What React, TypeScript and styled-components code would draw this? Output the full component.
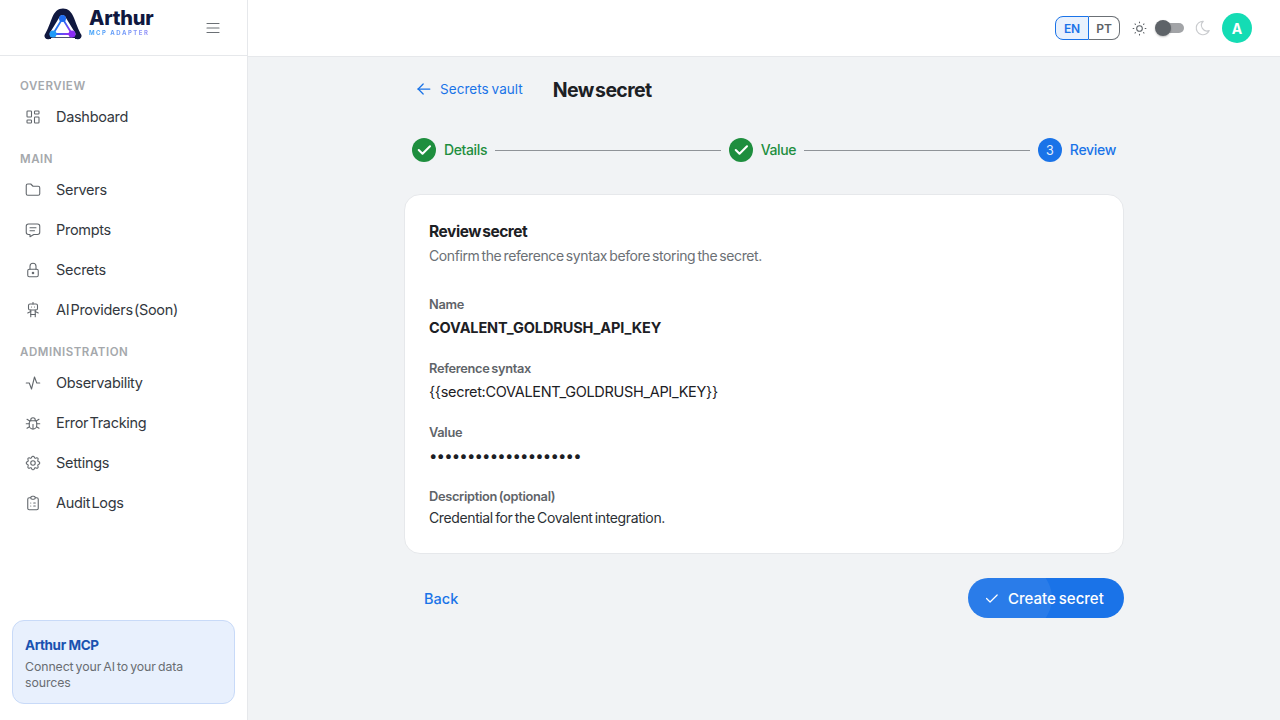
import React from 'react';
import styled, { createGlobalStyle } from 'styled-components';
import {
  TbActivity,
  TbArrowLeft,
  TbBug,
  TbCheck,
  TbClipboardList,
  TbFolder,
  TbLayoutDashboard,
  TbLock,
  TbMenu2,
  TbMessage,
  TbMoon,
  TbRobot,
  TbSettings,
  TbSun,
} from 'react-icons/tb';

const GlobalStyle = createGlobalStyle`
  html, body { margin: 0; padding: 0; height: 100%; }
  body {
    font-family: Inter, "Liberation Sans", sans-serif;
    color: #1c2024;
    background: #f1f3f5;
    overflow: hidden;
  }
  * { box-sizing: border-box; }
`;

const navGroups = [
  { title: 'OVERVIEW', items: [{ label: 'Dashboard', icon: TbLayoutDashboard }] },
  {
    title: 'MAIN',
    items: [
      { label: 'Servers', icon: TbFolder },
      { label: 'Prompts', icon: TbMessage },
      { label: 'Secrets', icon: TbLock },
      { label: 'AI Providers (Soon)', icon: TbRobot },
    ],
  },
  {
    title: 'ADMINISTRATION',
    items: [
      { label: 'Observability', icon: TbActivity },
      { label: 'Error Tracking', icon: TbBug },
      { label: 'Settings', icon: TbSettings },
      { label: 'Audit Logs', icon: TbClipboardList },
    ],
  },
];

const Logo = () => (
  <LogoWrap>
    <svg viewBox="0 0 38 32">
      <defs>
        <linearGradient id="tri" x1="0" y1="0" x2="1" y2="0.6">
          <stop offset="0" stopColor="#1f9bf8" />
          <stop offset="0.5" stopColor="#2a6cf2" />
          <stop offset="1" stopColor="#8a35f5" />
        </linearGradient>
      </defs>
      <path
        d="M0.5 27 C3 23 5 18 8 10 C10.500 3.500 14 0.500 19 0.500 C24 0.500 27.500 3.500 30 10 C33 18 35 23 37.500 27 C38 30 35.500 32 32.500 31 L5.500 31 C2.500 32 0 30 0.500 27 Z"
        fill="#10183f"
      />
      <path
        d="M18.500 10.500 L28 26 L9 26 Z"
        fill="#fff"
        stroke="#fff"
        strokeWidth="6.500"
        strokeLinejoin="round"
      />
      <rect x="7" y="30" width="24" height="2" fill="#fff" />
      <path
        d="M18.500 10.500 L28 26 L9 26 Z"
        fill="#fff"
        stroke="url(#tri)"
        strokeWidth="1.800"
        strokeLinejoin="round"
      />
      <circle cx="18.500" cy="10.500" r="3.500" fill="#1f6cf0" />
      <circle cx="9" cy="26" r="3.500" fill="#1f9bf8" />
      <circle cx="28" cy="26" r="3.500" fill="#8a2cf5" />
    </svg>
    <LogoText>
      <LogoName>Arthur</LogoName>
      <LogoSub>MCP ADAPTER</LogoSub>
    </LogoText>
  </LogoWrap>
);

const App = () => (
  <>
    <GlobalStyle />
    <Shell>
      <Sidebar>
        <SideHead>
          <Logo />
          <MenuButton>
            <TbMenu2 />
          </MenuButton>
        </SideHead>
        <Nav>
          {navGroups.map((group) => (
            <NavGroup key={group.title}>
              <GroupTitle>{group.title}</GroupTitle>
              {group.items.map(({ label, icon: Icon }) => (
                <NavItem key={label}>
                  <Icon />
                  <span>{label}</span>
                </NavItem>
              ))}
            </NavGroup>
          ))}
        </Nav>
        <Promo>
          <PromoTitle>Arthur MCP</PromoTitle>
          <PromoText>Connect your AI to your data sources</PromoText>
        </Promo>
      </Sidebar>
      <Main>
        <TopBar>
          <LangGroup>
            <LangButton $active>EN</LangButton>
            <LangButton>PT</LangButton>
          </LangGroup>
          <SunIcon>
            <TbSun />
          </SunIcon>
          <Switch>
            <SwitchKnob />
          </Switch>
          <MoonIcon>
            <TbMoon />
          </MoonIcon>
          <Avatar>A</Avatar>
        </TopBar>
        <Content>
          <Page>
            <PageHead>
              <BackLink>
                <TbArrowLeft />
                Secrets vault
              </BackLink>
              <PageTitle>New secret</PageTitle>
            </PageHead>
            <Stepper>
              <Step>
                <DoneDot>
                  <TbCheck />
                </DoneDot>
                <StepLabel $done>Details</StepLabel>
              </Step>
              <Connector />
              <Step>
                <DoneDot>
                  <TbCheck />
                </DoneDot>
                <StepLabel $done>Value</StepLabel>
              </Step>
              <Connector />
              <Step>
                <ActiveDot>3</ActiveDot>
                <StepLabel>Review</StepLabel>
              </Step>
            </Stepper>
            <Card>
              <CardTitle>Review secret</CardTitle>
              <CardSub>Confirm the reference syntax before storing the secret.</CardSub>
              <FieldList>
                <Field>
                  <FieldLabel>Name</FieldLabel>
                  <NameValue>COVALENT_GOLDRUSH_API_KEY</NameValue>
                </Field>
                <Field>
                  <FieldLabel>Reference syntax</FieldLabel>
                  <FieldValue>{'{{secret:COVALENT_GOLDRUSH_API_KEY}}'}</FieldValue>
                </Field>
                <Field>
                  <FieldLabel>Value</FieldLabel>
                  <Dots>••••••••••••••••••••</Dots>
                </Field>
                <Field>
                  <FieldLabel>Description (optional)</FieldLabel>
                  <DescValue>Credential for the Covalent integration.</DescValue>
                </Field>
              </FieldList>
            </Card>
            <Actions>
              <TextButton>Back</TextButton>
              <PrimaryButton>
                <TbCheck />
                <span>Create secret</span>
              </PrimaryButton>
            </Actions>
          </Page>
        </Content>
      </Main>
    </Shell>
  </>
);

export default App;

const Shell = styled.div`
  display: flex;
  width: 1280px;
  height: 720px;
`;

const Sidebar = styled.aside`
  display: flex;
  flex-direction: column;
  width: 248px;
  flex-shrink: 0;
  background: #fff;
  border-right: 1px solid #e6e8eb;
`;

const SideHead = styled.div`
  display: flex;
  align-items: center;
  justify-content: space-between;
  height: 56px;
  padding: 0 25px 0 44px;
  border-bottom: 1px solid #e6e8eb;
`;

const LogoWrap = styled.div`
  display: flex;
  align-items: flex-start;
  gap: 7px;
  margin-bottom: 7px;

  svg {
    display: block;
    width: 38px;
    height: 32px;
  }
`;

const LogoText = styled.div`
  display: flex;
  flex-direction: column;
`;

const LogoName = styled.div`
  font-size: 20px;
  line-height: 21px;
  font-weight: 800;
  letter-spacing: -0.2px;
  color: #10183f;
`;

const LogoSub = styled.div`
  font-size: 6px;
  line-height: 7px;
  font-weight: 700;
  letter-spacing: 1.5px;
  background: linear-gradient(90deg, #38a0f8, #9a8cf8);
  -webkit-background-clip: text;
  background-clip: text;
  color: transparent;
`;

const MenuButton = styled.div`
  display: flex;
  color: #6b7075;

  svg {
    width: 18px;
    height: 18px;
    stroke-width: 1.5;
  }
`;

const Nav = styled.nav`
  display: flex;
  flex-direction: column;
  flex: 1;
  padding-top: 22px;
`;

const NavGroup = styled.div`
  display: flex;
  flex-direction: column;
  margin-bottom: 14px;
`;

const GroupTitle = styled.div`
  padding-left: 20px;
  margin-bottom: 3px;
  font-size: 11.5px;
  line-height: 16px;
  font-weight: 600;
  letter-spacing: 0.55px;
  color: #a5a8ac;
`;

const NavItem = styled.div`
  display: flex;
  align-items: center;
  gap: 14px;
  height: 40px;
  padding-left: 24px;
  padding-bottom: 1px;
  font-size: 14.5px;
  letter-spacing: -0.3px;
  word-spacing: -2.6px;
  color: #33383e;

  svg {
    width: 18px;
    height: 18px;
    stroke-width: 1.45;
    color: #62676c;
    flex-shrink: 0;
  }
`;

const Promo = styled.div`
  margin: 0 12px 16px;
  height: 84px;
  padding: 14px 12px 0;
  background: #e8f0fd;
  border: 1px solid #c8daf8;
  border-radius: 12px;
`;

const PromoTitle = styled.div`
  font-size: 13.5px;
  line-height: 20px;
  font-weight: 700;
  letter-spacing: -0.4px;
  color: #1a52b0;
`;

const PromoText = styled.div`
  margin-top: 4px;
  font-size: 12.3px;
  line-height: 16px;
  letter-spacing: -0.08px;
  word-spacing: -1.3px;
  color: #686d72;
`;

const Main = styled.main`
  display: flex;
  flex-direction: column;
  flex: 1;
  min-width: 0;
`;

const TopBar = styled.header`
  display: flex;
  align-items: center;
  justify-content: flex-end;
  height: 57px;
  padding: 0 28px 0 0;
  background: #fff;
  border-bottom: 1px solid #e6e8eb;
`;

const LangGroup = styled.div`
  display: flex;
  margin-right: 11px;
`;

const LangButton = styled.div<{ $active?: boolean }>`
  display: flex;
  align-items: center;
  justify-content: center;
  width: ${(p) => (p.$active ? '34px' : '31px')};
  height: 24px;
  font-size: 12px;
  font-weight: 600;
  letter-spacing: -0.2px;
  color: ${(p) => (p.$active ? '#1a73e8' : '#5c6166')};
  background: ${(p) => (p.$active ? '#e9f1fd' : 'transparent')};
  border: 1px solid ${(p) => (p.$active ? '#1a73e8' : '#6b7075')};
  border-left-width: ${(p) => (p.$active ? '1px' : '0')};
  border-radius: ${(p) => (p.$active ? '8px 0 0 8px' : '0 8px 8px 0')};
`;

const SunIcon = styled.div`
  display: flex;
  color: #5c6166;

  svg {
    width: 17px;
    height: 17px;
    stroke-width: 1.5;
  }
`;

const MoonIcon = styled.div`
  display: flex;
  color: #c9cbce;

  svg {
    width: 18px;
    height: 18px;
    stroke-width: 1.5;
  }
`;

const Switch = styled.div`
  position: relative;
  width: 28px;
  height: 10px;
  margin: 0 10px 0 8px;
  border-radius: 5px;
  background: #a2a4a7;
`;

const SwitchKnob = styled.div`
  position: absolute;
  left: -1px;
  top: -3px;
  width: 16px;
  height: 16px;
  border-radius: 50%;
  background: #5e6368;
  box-shadow: 0 1px 2px rgba(0, 0, 0, 0.25);
`;

const Avatar = styled.div`
  display: flex;
  align-items: center;
  justify-content: center;
  width: 30px;
  height: 30px;
  margin-left: 10px;
  border-radius: 50%;
  background: #14dcb4;
  color: #fff;
  font-size: 14px;
  font-weight: 700;
`;

const Content = styled.div`
  display: flex;
  justify-content: center;
  flex: 1;
  background: #f1f3f5;
`;

const Page = styled.div`
  display: flex;
  flex-direction: column;
  width: 720px;
`;

const PageHead = styled.div`
  display: flex;
  align-items: center;
  height: 66px;
`;

const BackLink = styled.div`
  display: flex;
  align-items: center;
  gap: 6px;
  margin: 0 30px 2px 10px;
  font-size: 13.5px;
  letter-spacing: 0.05px;
  word-spacing: -1px;
  color: #1a73e8;

  svg {
    width: 20px;
    height: 20px;
    stroke-width: 1.5;
  }
`;

const PageTitle = styled.h1`
  margin: 0;
  font-size: 19.5px;
  font-weight: 700;
  letter-spacing: -0.65px;
  word-spacing: -2.5px;
  color: #1c2024;
`;

const Stepper = styled.div`
  display: flex;
  align-items: center;
  height: 24px;
  margin-top: 15px;
  margin-bottom: 32px;
  padding: 0 8px;
`;

const Step = styled.div`
  display: flex;
  align-items: center;
  gap: 8px;
`;

const Connector = styled.div`
  flex: 1;
  height: 1px;
  margin: 0 8px;
  background: #8f9398;
`;

const DoneDot = styled.div`
  display: flex;
  align-items: center;
  justify-content: center;
  width: 24px;
  height: 24px;
  border-radius: 50%;
  background: #1e8e3e;
  color: #fff;

  svg {
    width: 18px;
    height: 18px;
    stroke-width: 2.8;
  }
`;

const ActiveDot = styled.div`
  display: flex;
  align-items: center;
  justify-content: center;
  width: 24px;
  height: 24px;
  border-radius: 50%;
  background: #1a73e8;
  color: #e6f0fd;
  font-size: 12.5px;
`;

const StepLabel = styled.div<{ $done?: boolean }>`
  padding-bottom: 1px;
  font-size: 14px;
  font-weight: 500;
  letter-spacing: ${(p) => (p.$done ? '-0.38px' : '-0.3px')};
  color: ${(p) => (p.$done ? '#1e8e3e' : '#1a73e8')};
`;

const Card = styled.section`
  display: flex;
  flex-direction: column;
  height: 360px;
  padding: 26px 24px 0;
  background: #fff;
  border: 1px solid #e6e8eb;
  border-radius: 16px;
`;

const CardTitle = styled.h2`
  margin: 0;
  font-size: 15.5px;
  line-height: 22px;
  font-weight: 700;
  letter-spacing: -0.45px;
  word-spacing: -2px;
  color: #1c2024;
`;

const CardSub = styled.p`
  margin: 3px 0 0;
  font-size: 14px;
  line-height: 20px;
  letter-spacing: -0.4px;
  word-spacing: -1.4px;
  color: #6b7075;
`;

const FieldList = styled.div`
  display: flex;
  flex-direction: column;
  margin-top: 30px;
`;

const Field = styled.div`
  display: flex;
  flex-direction: column;
  height: 64px;
`;

const FieldLabel = styled.div`
  font-size: 12.8px;
  line-height: 18px;
  font-weight: 600;
  letter-spacing: -0.3px;
  word-spacing: -1.2px;
  color: #5f6469;
`;

const NameValue = styled.div`
  margin-top: 3px;
  font-size: 14.5px;
  line-height: 22px;
  font-weight: 700;
  letter-spacing: -0.12px;
  color: #1c2024;
`;

const FieldValue = styled.div`
  margin-top: 3px;
  font-size: 14.5px;
  line-height: 22px;
  letter-spacing: -0.32px;
  color: #1c2024;
`;

const Dots = styled.div`
  margin-top: 3px;
  font-size: 15px;
  line-height: 22px;
  letter-spacing: -0.85px;
  color: #1c2024;
`;

const DescValue = styled.div`
  margin-top: 2px;
  font-size: 14px;
  line-height: 20px;
  letter-spacing: -0.38px;
  word-spacing: -1.2px;
  color: #2b3035;
`;

const Actions = styled.div`
  display: flex;
  align-items: center;
  justify-content: space-between;
  margin-top: 24px;
`;

const TextButton = styled.div`
  margin-left: 20px;
  font-size: 14.5px;
  font-weight: 500;
  color: #1a73e8;
`;

const PrimaryButton = styled.div`
  position: relative;
  display: flex;
  align-items: center;
  gap: 8px;
  width: 156px;
  height: 40px;
  padding-left: 15px;
  overflow: hidden;
  border-radius: 20px;
  background: #1a73e8;
  color: #fff;
  font-size: 15px;
  font-weight: 500;
  word-spacing: -1px;

  &::before {
    content: '';
    position: absolute;
    left: -22px;
    top: -22px;
    width: 106px;
    height: 84px;
    border-radius: 50%;
    background: rgba(255, 255, 255, 0.07);
  }

  svg {
    position: relative;
    width: 17px;
    height: 17px;
    stroke-width: 1.7;
  }

  span {
    position: relative;
  }
`;

void React;
